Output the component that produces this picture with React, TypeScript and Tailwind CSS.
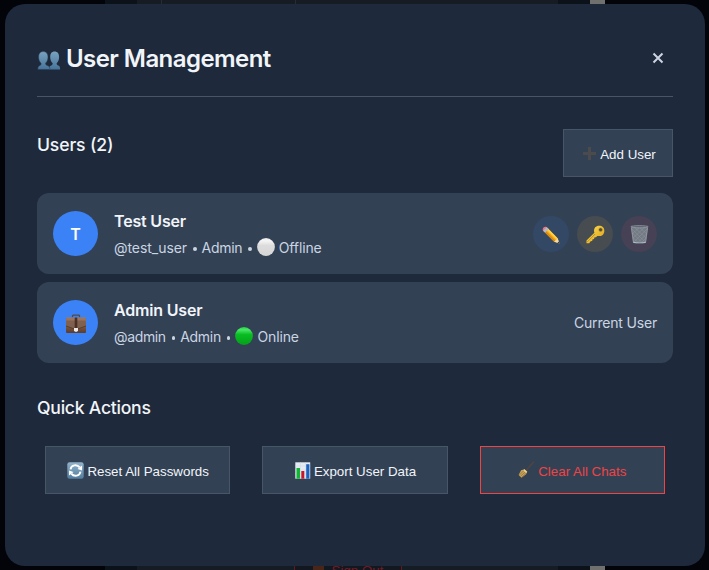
import type { ReactNode } from 'react';

function People() {
  return (
    <svg width="24" height="24" viewBox="0 0 24 24" className="mt-[2px] shrink-0">
      <defs>
        <linearGradient id="people" x1="0" y1="0" x2="0" y2="1">
          <stop offset="0" stopColor="#79a3bf" />
          <stop offset="1" stopColor="#46739a" />
        </linearGradient>
      </defs>
      <g fill="url(#people)">
        <path d="M17.600 3.500c3 0 4.500 2.200 4.500 5.500 0 2.600-.9 4.900-2.300 6-.5 1.300.2 2 2 2.700 1 .5 1.300 1.600 1.300 3.800H12c0-2.200.5-3.300 1.700-3.800 1.700-.7 2.300-1.400 1.800-2.700-1.400-1.100-2.300-3.400-2.300-6 0-3.300 1.400-5.500 4.400-5.500Z" />
        <path d="M6.200 3.500c3 0 4.800 2.200 4.800 5.500 0 2.600-.9 4.900-2.300 6-.5 1.300.2 2 2.200 2.700 1.400.5 2 1.600 2 3.800H.8c0-2.200.5-3.300 1.700-3.800 1.500-.7 1.900-1.400 1.400-2.700-1.400-1.100-2.300-3.400-2.300-6 0-3.300 1.600-5.500 4.600-5.500Z" stroke="#263a50" strokeWidth=".5" />
      </g>
    </svg>
  );
}

function Pencil() {
  return (
    <svg width="18" height="18" viewBox="0 0 18 18" className="mt-[2px]">
      <path d="M4.700 1.200 15.600 12.200 17.300 17.300 12.200 15.700 1.200 4.700Z" fill="#f5ad18" />
      <path d="m5.800 2.300 9.800 9.900-1.500 1L4.500 3.600Z" fill="#ffd246" />
      <path d="m2.300 5.800 1.200-1.200 9.800 9.800-1.100 1.300Z" fill="#da8710" />
      <path d="M.8 4.500C.2 2 2 .3 4.500.9l1.600 1.600-3.600 3.600Z" fill="#ed7480" />
      <path d="m4.700 1.200 1.900 1.900-3.500 3.500-1.900-1.900Z" fill="#aebbc9" />
      <path d="m15.600 12.200 1.900 5.300-5.300-1.800Z" fill="#f4dcaa" />
      <path d="m16.700 15.500.8 2-2-.8Z" fill="#38312c" />
    </svg>
  );
}

function Key() {
  return (
    <svg width="19" height="19" viewBox="0 0 19 19" className="mt-[2px]">
      <defs>
        <linearGradient id="key" x1="0" y1="0" x2="1" y2="1">
          <stop offset="0" stopColor="#ffe35a" />
          <stop offset="1" stopColor="#dc9d12" />
        </linearGradient>
      </defs>
      <path fillRule="evenodd" d="M9.200 2.300C10.800.5 14.800.1 17 2.200c2 2.100 1.700 6-.3 7.700-1.300 1.100-3.700 1.400-5.400 1l-1.300 1.300-1.700.2-.2 1.700-1.700.3-.2 1.600-1.600.3-1.400 1.900H.5v-2.600l7.900-7.900C7.700 5.700 8 3.700 9.200 2.300ZM14.600 3a1.700 1.700 0 1 0 0 3.400 1.700 1.700 0 0 0 0-3.400Z" fill="url(#key)" />
      <path d="m1.200 17 7.900-8" stroke="#a97816" strokeWidth=".7" />
      <circle cx="14.600" cy="4.700" r="1.900" fill="none" stroke="#b9820f" strokeWidth=".5" />
    </svg>
  );
}

function Trash() {
  return (
    <svg width="19" height="19" viewBox="0 0 19 19" className="mt-px">
      <path d="M1 1.500h17l-2.200 16.200q-6.300 1-12.600 0Z" fill="#727a83" />
      <path d="m2 4 13.200 13M4 2l12 11M9 2l8 7M2.500 8l9.500 9.500M3.500 13l4.500 4.500M17 4 4 17M15 2 3 13M10 2 2 9M16.500 9 8 17.500M16 13l-4.500 4.500" stroke="#92979e" strokeWidth=".5" />
      <path d="m1.400 3 2 14.300M17.600 3l-2 14.300" stroke="#9da5af" strokeWidth=".7" />
      <ellipse cx="9.500" cy="1.700" rx="8.700" ry="1.100" fill="#59636e" stroke="#a4adb8" strokeWidth=".6" />
      <path d="M3.300 16.800q6.200 1.200 12.400 0v1.100q-6.200.9-12.400 0Z" fill="#a9bdc9" />
    </svg>
  );
}

function Briefcase() {
  return (
    <svg width="22" height="20" viewBox="0 0 22 20" className="mt-[3px]">
      <defs>
        <linearGradient id="case" x1="0" y1="0" x2="0" y2="1">
          <stop offset="0" stopColor="#a47c63" />
          <stop offset="1" stopColor="#5d3c2c" />
        </linearGradient>
      </defs>
      <path d="M7.500 3.500V2q0-.8.8-.8h5.400q.8 0 .8.800v1.500" fill="none" stroke="#514a48" strokeWidth="1.300" />
      <rect x="1" y="3.500" width="20" height="15.500" rx="1" fill="url(#case)" />
      <path d="M1.200 4h19.600v8L14 14.500H8L1.200 12Z" fill="#80604e" />
      <path d="M1.200 3.700h19.600v2.800H1.200Z" fill="#997560" />
      <path d="M1 12l7 2.500h6l7-2.500" fill="none" stroke="#50372b" strokeWidth=".8" />
      <path d="M9.700 3.500h2.600v10.500H9.700Z" fill="#493127" />
      <path d="M9 14h4v2.500l-1 1.300h-2l-1-1.300Z" fill="#eee9e4" />
    </svg>
  );
}

function Refresh() {
  return (
    <svg width="17" height="17" viewBox="0 0 17 17">
      <defs>
        <linearGradient id="refresh" x1="0" y1="0" x2="0" y2="1">
          <stop offset="0" stopColor="#92b4cb" />
          <stop offset="1" stopColor="#527d9f" />
        </linearGradient>
      </defs>
      <rect x=".3" y=".3" width="16.400" height="16.400" rx="2.300" fill="url(#refresh)" />
      <path d="M3.500 7.300C4.200 2.700 10 1.900 12.700 5.400M13.500 9.700c-.7 4.600-6.500 5.400-9.200 1.900" fill="none" stroke="#fff" strokeWidth="1.900" />
      <path d="M15 3.500v5L10.500 7ZM2 13.500v-5L6.500 10Z" fill="#fff" />
    </svg>
  );
}

function Chart() {
  return (
    <svg width="16" height="17" viewBox="0 0 16 17">
      <path d="M.3.3h14.900v16.400H.3Z" fill="#e4eaf2" />
      <path d="M.3 4h14.900M.3 8h14.900M.3 12h14.900M5.500.3v16.400M10.500.3v16.400" stroke="#ccd7e4" strokeWidth=".5" />
      <path d="M1.500 6h3.500v10.700H1.500Z" fill="#0fb735" />
      <path d="M6.300 9h3v7.700h-3Z" fill="#c9172a" />
      <path d="M11.200 2.200h3.200v14.500h-3.200Z" fill="#1d63bd" />
    </svg>
  );
}

function Broom() {
  return (
    <svg width="16" height="18" viewBox="0.200 0 16 18">
      <path d="m8.300 9.500 7.700-8.700" stroke="#54443e" strokeWidth="1.300" />
      <path d="m6.800 8.200 2.700 2.600-1.200 2.400-4.600 3.500-2.900-2.800 2.500-4.700Z" fill="#c8a35a" />
      <path d="m1.500 14 5-4.800M2.700 15.300l5-4.600M3.700 16.500l4.500-4.200" stroke="#89662d" strokeWidth=".6" />
      <path d="m6.700 8.300 2.600 2.500-1 1.100-2.900-2.700Z" fill="#ead18e" />
    </svg>
  );
}

function Dot({ online }: { online: boolean }) {
  const id = online ? 'online' : 'offline';
  return (
    <svg width="18" height="18" viewBox="0 0 18 18" className="mb-[2px] shrink-0">
      <defs>
        <linearGradient id={id} x1="0" y1="0" x2="0" y2="1">
          <stop offset="0" stopColor={online ? '#19d83f' : '#e8e8e8'} />
          <stop offset=".15" stopColor={online ? '#4be667' : '#f5f5f5'} />
          <stop offset=".42" stopColor={online ? '#08bd22' : '#dcdcdc'} />
          <stop offset="1" stopColor={online ? '#05a01a' : '#d6d6d6'} />
        </linearGradient>
      </defs>
      <circle cx="9" cy="9" r="8.900" fill={`url(#${id})`} />
    </svg>
  );
}

function Separator() {
  return <span className="mt-[2px] mr-[5px] ml-[6px] size-[3.500px] shrink-0 rounded-full bg-slate-300" />;
}

function UserRow({ avatar, name, handle, online, children }: { avatar: ReactNode; name: string; handle: string; online: boolean; children: ReactNode }) {
  return (
    <div className="flex h-[81px] items-center justify-between rounded-xl bg-[#334155] px-4">
      <div className="flex items-center gap-4">
        <div className="flex size-[45px] items-center justify-center rounded-full bg-[#3b82f6] text-base font-semibold text-white">{avatar}</div>
        <div className="w-[230px] whitespace-nowrap">
          <div className="h-6 pt-[2px] text-base leading-6 font-semibold tracking-[-0.18px] text-slate-100">{name}</div>
          <div className="mt-[5px] flex h-6 items-center text-sm leading-6 tracking-[-0.12px] text-slate-300">
            <span className={online ? 'tracking-[-0.36px]' : 'tracking-[-0.05px]'}>{handle}</span>
            <Separator />
            <span className="tracking-[-0.300px]">Admin</span>
            <Separator />
            <Dot online={online} />
            <span className="ml-1">{online ? 'Online' : 'Offline'}</span>
          </div>
        </div>
      </div>
      {children}
    </div>
  );
}

const buttonBase = "flex h-12 items-center justify-center border font-['Liberation_Sans',Arial,sans-serif] text-[13.333px] whitespace-nowrap bg-[#334155]";

export default function App() {
  return (
    <div className="relative h-[570px] w-[709px] overflow-hidden bg-[#020409] font-['Inter',sans-serif]">
      <div className="absolute inset-0 flex">
        <div className="w-[105px] bg-[#020409]" />
        <div className="w-8 bg-[#0b1219]" />
        <div className="flex w-[421px] bg-[#161c24]">
          <div className="h-1 w-[25px] border-r border-[#252c34]" />
          <div className="h-1 w-[134px] border-r border-[#252c34]" />
        </div>
        <div className="w-8 bg-[#0b1219]" />
        <div className="w-[15px] bg-[#70706e]" />
        <div className="flex-1 bg-[#020409]" />
      </div>
      <div className="absolute top-[558px] left-[294px] flex h-6 w-[108px] items-center justify-center gap-2 border-x border-[#64191f] bg-[#131720] pt-[2px] font-['Liberation_Sans',Arial,sans-serif] text-[13.333px] text-[#701c23]">
        <span className="h-3 w-[11px] bg-[#482517]" />
        <span>Sign Out</span>
      </div>
      <div className="relative mt-1 ml-[5px] h-[562px] w-[700px] rounded-[20px] bg-[#1e293b] p-8">
        <header className="flex h-[61px] items-start justify-between border-b border-[#475569]">
          <h2 className="flex items-center pt-[7px] text-2xl leading-8 font-semibold tracking-[-0.56px] text-slate-100">
            <People />
            <span className="ml-[5px]">User Management</span>
          </h2>
          <button className="mt-[6px] flex h-[31px] w-[30px] items-center justify-center">
            <svg width="12" height="12" viewBox="0 0 12 12"><path d="m1.500 1.500 9 9m0-9-9 9" stroke="#cbd5e1" strokeWidth="2" /></svg>
          </button>
        </header>
        <section className="mt-8">
          <div className="flex h-12 items-start justify-between">
            <h3 className="pt-1 text-[17.6px] leading-6 font-medium tracking-[-0.15px] text-slate-100">Users (2)</h3>
            <button className={`${buttonBase} w-[110px] border-[#475569] pt-[4px] pl-[3px] text-slate-100`}>
              <svg width="13" height="13" viewBox="0 0 13 13" className="mr-1 mb-1"><path d="M5 0h3v5h5v3H8v5H5V8H0V5h5Z" fill="#4b4b4d" /></svg>
              Add User
            </button>
          </div>
          <div className="mt-4 flex flex-col gap-2">
            <UserRow avatar="T" name="Test User" handle="@test_user" online={false}>
              <div className="flex gap-2">
                <button className="flex size-9 items-center justify-center rounded-full bg-[#334865]"><Pencil /></button>
                <button className="flex size-9 items-center justify-center rounded-full bg-[#464c50]"><Key /></button>
                <button className="flex size-9 items-center justify-center rounded-full bg-[#464154]"><Trash /></button>
              </div>
            </UserRow>
            <UserRow avatar={<Briefcase />} name="Admin User" handle="@admin" online>
              <span className="text-sm tracking-[-0.18px] text-slate-300">Current User</span>
            </UserRow>
          </div>
        </section>
        <section className="mt-8">
          <h3 className="h-[27px] text-[17.6px] leading-[25px] font-medium tracking-[-0.24px] text-slate-100">Quick Actions</h3>
          <div className="mt-6 grid grid-cols-3 gap-8 px-2">
            <button className={`${buttonBase} gap-1 border-[#475569] pt-[4px] text-slate-100`}><span className="-mt-1 -mr-px pl-px"><Refresh /></span>Reset All Passwords</button>
            <button className={`${buttonBase} gap-1 border-[#475569] pt-[4px] text-slate-100`}><span className="-mt-1 -mr-px pl-px"><Chart /></span>Export User Data</button>
            <button className={`${buttonBase} gap-1 border-[#ef4444] pt-[4px] text-[#ef4444]`}><span className="-mt-1"><Broom /></span>Clear All Chats</button>
          </div>
        </section>
      </div>
    </div>
  );
}
